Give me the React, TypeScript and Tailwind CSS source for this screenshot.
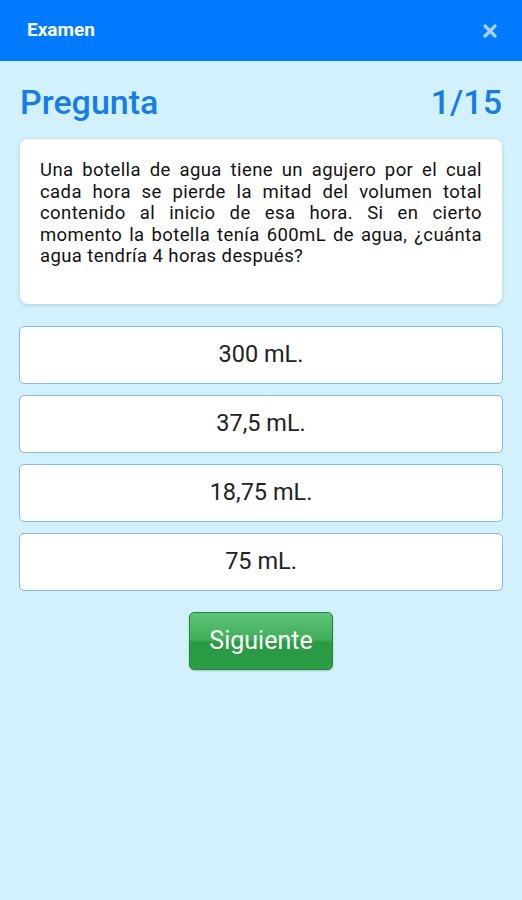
import React, { useState } from 'react';

const options = ['300 mL.', '37,5 mL.', '18,75 mL.', '75 mL.'];

export default function App() {
  const [selected, setSelected] = useState<number | null>(null);

  return (
    <div className="min-h-[900px] bg-[#d3f0fd] font-['Roboto',_'Liberation_Sans',_sans-serif]">
      <header className="flex h-[61px] items-center justify-between bg-[#007bff] pl-[27px] pr-[25px]">
        <h1 className="text-[19px] font-bold text-white">Examen</h1>
        <svg width="14" height="14" viewBox="0 0 14 14" className="mt-[1px]">
          <path d="M2 2 L12 12 M12 2 L2 12" stroke="#a9d0fa" strokeWidth="3.2" strokeLinecap="round" />
        </svg>
      </header>

      <main className="px-[19px]">
        <div className="flex items-center justify-between pl-[1px] pr-[1px] pt-[21px]">
          <h2 className="text-[34px] font-medium leading-[40px] text-[#157ee6]">Pregunta</h2>
          <span className="text-[34px] font-medium leading-[40px] text-[#157ee6]">1/15</span>
        </div>

        <div className="mx-[1px] mt-[17px] h-[165px] rounded-lg bg-white px-[20px] pt-[21px] shadow-[0_1px_4px_rgba(0,0,0,0.15)]">
          <p className="text-justify text-[18.5px] font-normal leading-[21.5px] tracking-[0.4px] text-[#111]">
            Una botella de agua tiene un agujero por el cual cada hora se pierde la mitad del volumen
            total contenido al inicio de esa hora. Si en cierto momento la botella tenía 600mL de
            agua, ¿cuánta agua tendría 4 horas después?
          </p>
        </div>

        <div className="mt-[22px] flex flex-col gap-[11px]">
          {options.map((opt, i) => (
            <button
              key={opt}
              onClick={() => setSelected(i)}
              className={
                'flex h-[58px] items-center justify-center rounded-[5px] border-[1.5px] border-[#86b9e4] text-[23.5px] text-[#222] ' +
                (selected === i ? 'bg-[#e8f4ff]' : 'bg-white')
              }
            >
              {opt}
            </button>
          ))}
        </div>

        <div className="mt-[21px] flex justify-center">
          <button className="flex h-[58px] w-[144px] items-center justify-center rounded-[5px] border border-[#1e8a36] bg-[linear-gradient(to_bottom,#5ec477_0%,#3fae5a_48%,#2a9a44_52%,#2b9d45_100%)] text-[25px] text-white shadow-[0_1px_2px_rgba(0,0,0,0.2)]">
            Siguiente
          </button>
        </div>
      </main>
    </div>
  );
}
